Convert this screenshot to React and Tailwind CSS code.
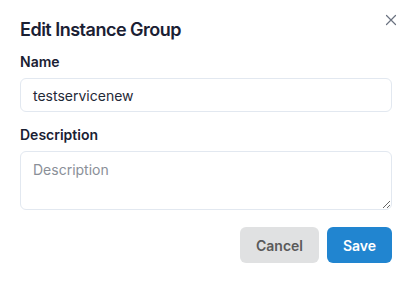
import React from "react";

export default function App() {
  return (
    <div className="w-[412px] h-[282px] bg-white relative px-5 pt-4" style={{ fontFamily: "Inter, 'Noto Sans', sans-serif" }}>
      <button className="absolute right-[15px] top-[14px] w-[12px] h-[12px] text-[#6b7280]">
        <svg viewBox="0 0 12 12" width="12" height="12" fill="none" stroke="currentColor" strokeWidth="1.2" strokeLinecap="round">
          <path d="M1.5 1.5L10.5 10.5M10.5 1.5L1.5 10.5" />
        </svg>
      </button>
      <h2 className="text-[18px] leading-[28px] font-semibold text-[#1a2033] tracking-[-0.5px]">Edit Instance Group</h2>
      <div className="mt-2">
        <label className="block text-[14px] leading-[20px] font-semibold text-[#1a2033]">Name</label>
        <div className="mt-1.5 h-[34px] rounded-md border border-[#e2e8f0] flex items-center px-3 text-[14px] text-[#1f2937]">
          testservicenew
        </div>
      </div>
      <div className="mt-[13px]">
        <label className="block text-[14px] leading-[20px] font-semibold text-[#1a2033]">Description</label>
        <textarea
          className="mt-1.5 block w-full h-[59px] rounded-md border border-[#e2e8f0] px-3 py-2 text-[14px] leading-[20px] text-[#1f2937] placeholder:text-[#8a8f98] outline-none"
          placeholder="Description"
        />
      </div>
      <div className="mt-[17px] flex justify-end gap-2">
        <button className="h-[36px] w-[79px] rounded-md bg-[#e0e1e2] text-[#5a5a5a] text-[14px] font-semibold">Cancel</button>
        <button className="h-[36px] w-[65px] rounded-md bg-[#2185d0] text-white text-[14px] font-semibold">Save</button>
      </div>
    </div>
  );
}
